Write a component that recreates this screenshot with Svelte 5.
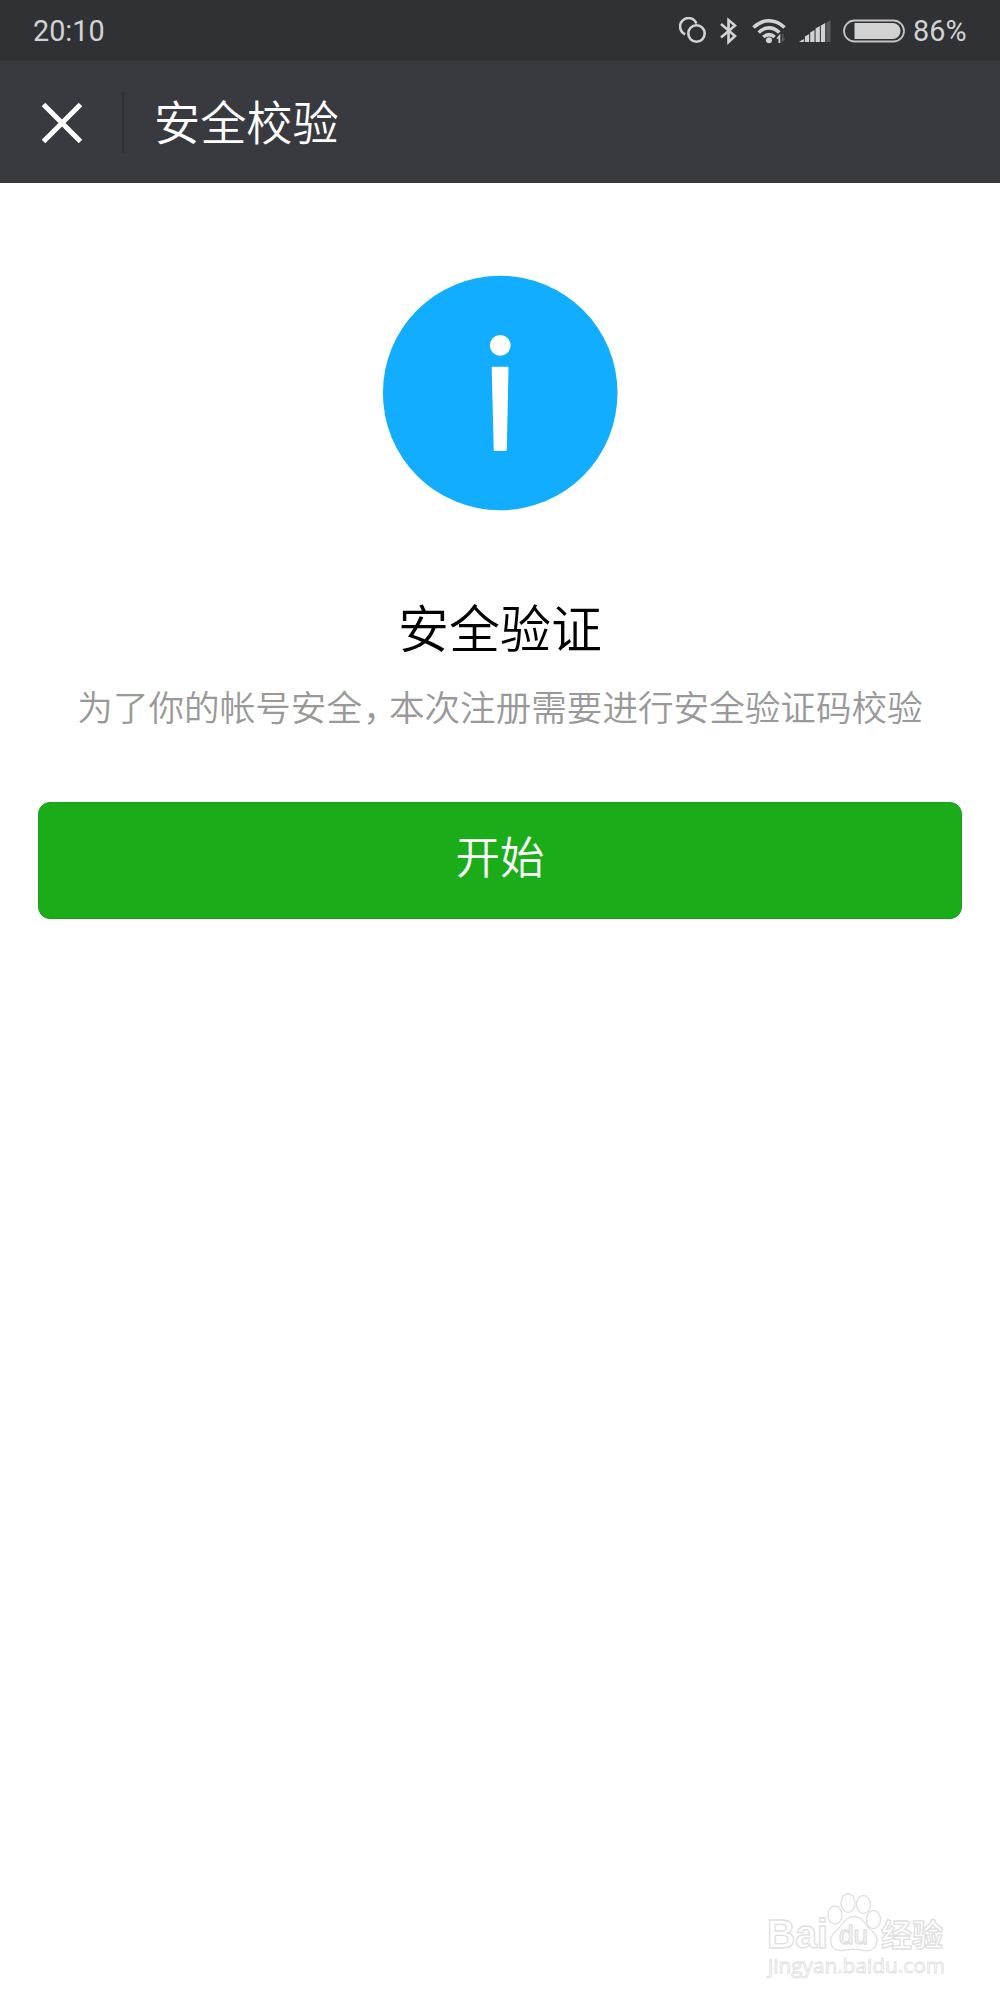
<script lang="ts">
    const time = "20:10";
    const battery = 86;
    const signalBars = [3, 8, 12, 16, 19, 22];

    let started = $state(false);
</script>

<div class="screen">
    <div class="status">
        <span class="time">{time}</span>
        <svg class="link" width="28" height="28" viewBox="0 0 28 28">
            <path d="M6.2 17.2A8.4 8.4 0 1 1 17.4 6.6" />
            <circle cx="17.5" cy="16.5" r="8.2" />
        </svg>
        <svg class="bluetooth" width="20" height="28" viewBox="0 0 20 28">
            <path d="M2 7L16 19L9.5 25V3L16 8.5L2 20.5" />
        </svg>
        <svg class="wifi" width="34" height="28" viewBox="0 0 34 28">
            <path d="M1.5 10.5C11 1.5 23 1.5 32.5 10.5M6.7 15.5C13 9.3 21 9.3 27.3 15.5M11.3 20C15 16.8 19 16.8 22.7 20" />
            <circle cx="17" cy="23.2" r="3" />
            <path class="mask" d="M24 28V21L29 15L34 19V28Z" />
            <path class="up" d="M28.3 26V16.5L24.3 21.8H26.5V26Z" />
            <path class="down" d="M29.8 17V26L33.3 21.6H31.5V17Z" />
        </svg>
        <svg class="signal" width="33" height="24" viewBox="0 0 33 24">
            {#each signalBars as h, i}
                <path
                    class:empty={i === signalBars.length - 1}
                    d="M{0.5 + i * 5.35} 23V{25.5 - h}L{4.8 + i * 5.35} {23 - h}V23Z"
                />
            {/each}
        </svg>
        <svg class="battery" width="62" height="24" viewBox="0 0 62 24">
            <rect class="shell" x="1" y="1.5" width="60" height="21" rx="10.5" />
            <path d="M11.5 4H49.5A8 8 0 0 1 49.5 20H11.5Z" />
        </svg>
        <span class="percent">{battery}%</span>
    </div>

    <header>
        <button class="close" aria-label="关闭">
            <svg width="42" height="42" viewBox="0 0 42 42">
                <path d="M2.5 2.5L39.5 39.5M39.5 2.5L2.5 39.5" />
            </svg>
        </button>
        <h1>安全校验</h1>
    </header>

    <main>
        <svg class="info" width="236" height="236" viewBox="0 0 236 236">
            <circle class="disc" cx="118.2" cy="118" r="117.3" />
            <circle cx="118.2" cy="70.3" r="10.4" />
            <path d="M110.5 91.8H125.5Q126.5 91.8 126.5 93L124.8 174.5Q124.8 176 123.5 176H112.5Q111.7 176 111.7 174.5L109.7 93Q109.7 91.8 110.5 91.8Z" />
        </svg>
        <h2>安全验证</h2>
        <p>为了你的帐号安全<span class="comma">，</span>本次注册需要进行安全验证码校验</p>
        <button class="start" class:started onclick={() => (started = true)}>开始</button>
    </main>

    <footer>
        <svg width="200" height="104" viewBox="0 0 200 104">
            <text class="brand" x="17" y="52" textLength="61" lengthAdjust="spacingAndGlyphs">Bai</text>
            <g class="paw">
                <ellipse cx="85" cy="19" rx="7" ry="9" />
                <ellipse cx="98" cy="7" rx="7" ry="9.5" />
                <ellipse cx="113.5" cy="8.5" rx="7" ry="9" />
                <ellipse cx="123.5" cy="23.5" rx="7" ry="9" />
                <path d="M103.5 20.5C113 20.5 115 29 121 34C132 43 126 56 115 54.5C107 53 100 53 92 54.5C80 55.5 77 43 86 35C93 29 95 20.5 103.5 20.5Z" />
            </g>
            <text class="du" x="89" y="48" textLength="29" lengthAdjust="spacingAndGlyphs">du</text>
            <text class="cjk" x="131" y="50" textLength="62">经验</text>
            <text class="site" x="18" y="76.5" textLength="177" lengthAdjust="spacingAndGlyphs">jingyan.baidu.com</text>
        </svg>
    </footer>
</div>

<style>
    :global(body) {
        margin: 0;
        background: #fff;
    }

    .screen {
        width: 1000px;
        height: 2000px;
        display: flex;
        flex-direction: column;
        font-family: "Noto Sans CJK SC", sans-serif;
        font-weight: 350;
        overflow: hidden;
    }

    .status {
        height: 61px;
        box-sizing: border-box;
        padding: 0 33.5px 0 33px;
        display: flex;
        align-items: center;
        background: #303135;
        color: #d2d2d3;
        font-family: Roboto, sans-serif;
        font-weight: 400;
        font-size: 28.8px;
    }
    .time {
        margin-right: auto;
    }
    .status svg {
        fill: #d2d2d3;
    }
    .status .link {
        fill: none;
        stroke: #d2d2d3;
        stroke-width: 2.6;
        margin-right: 12px;
    }
    .status .bluetooth {
        fill: none;
        stroke: #d2d2d3;
        stroke-width: 2.6;
        margin-right: 13px;
    }
    .wifi {
        margin-right: 13px;
    }
    .wifi path:first-child {
        fill: none;
        stroke: #d2d2d3;
        stroke-width: 3.6;
    }
    .wifi .mask {
        fill: #303135;
    }
    .wifi .down,
    .signal .empty {
        fill: #58595c;
    }
    .signal {
        margin-right: 11px;
    }
    .battery {
        margin-right: 8px;
    }
    .battery .shell {
        fill: none;
        stroke: #c4c4c5;
        stroke-width: 1.8;
    }

    header {
        height: 122px;
        display: flex;
        align-items: center;
        background: #393a3f;
    }
    .close {
        width: 124px;
        height: 61px;
        padding: 1px 0 0 40.5px;
        display: flex;
        align-items: center;
        border: none;
        border-right: 2px solid #2e2f33;
        box-sizing: border-box;
        background: none;
    }
    .close path {
        stroke: #fff;
        stroke-width: 5;
    }
    h1 {
        margin: 0 0 4px 30px;
        color: #fff;
        font-size: 46.2px;
        line-height: 60px;
        font-weight: 350;
    }

    main {
        flex: 1;
        display: flex;
        flex-direction: column;
        align-items: center;
        padding: 92px 38px 0;
    }
    .info {
        fill: #fff;
    }
    .info .disc {
        fill: #12adff;
    }
    h2 {
        margin: 83px 0 0;
        color: #000;
        font-size: 51px;
        line-height: 64px;
        font-weight: 350;
    }
    p {
        margin: 24px 0 0;
        color: #999;
        font-size: 35.6px;
        line-height: 48px;
        white-space: nowrap;
    }
    .comma {
        margin-left: 1px;
        letter-spacing: -9.6px;
    }
    .start {
        width: 924px;
        height: 117px;
        margin-top: 72px;
        padding: 0 0 12px;
        border: 1px solid #1a9f1a;
        border-radius: 12px;
        background: #1bad19;
        color: #fff;
        font: inherit;
        font-size: 44.5px;
    }
    .started {
        background: #179b16;
    }

    footer {
        height: 104px;
        display: flex;
        justify-content: flex-end;
        padding-right: 50px;
    }
    footer svg {
        overflow: visible;
        fill: #fff;
        stroke: #e0e0e0;
        stroke-width: 1.3;
    }
    .brand {
        font-family: "Liberation Sans", sans-serif;
        font-weight: 700;
        font-size: 40px;
    }
    .du {
        font-family: "Liberation Sans", sans-serif;
        font-size: 25px;
    }
    .cjk {
        font-weight: 700;
        font-size: 31px;
    }
    .site {
        font-family: "Open Sans", sans-serif;
        font-weight: 400;
        font-size: 20px;
        stroke-width: 0.8;
    }
</style>
